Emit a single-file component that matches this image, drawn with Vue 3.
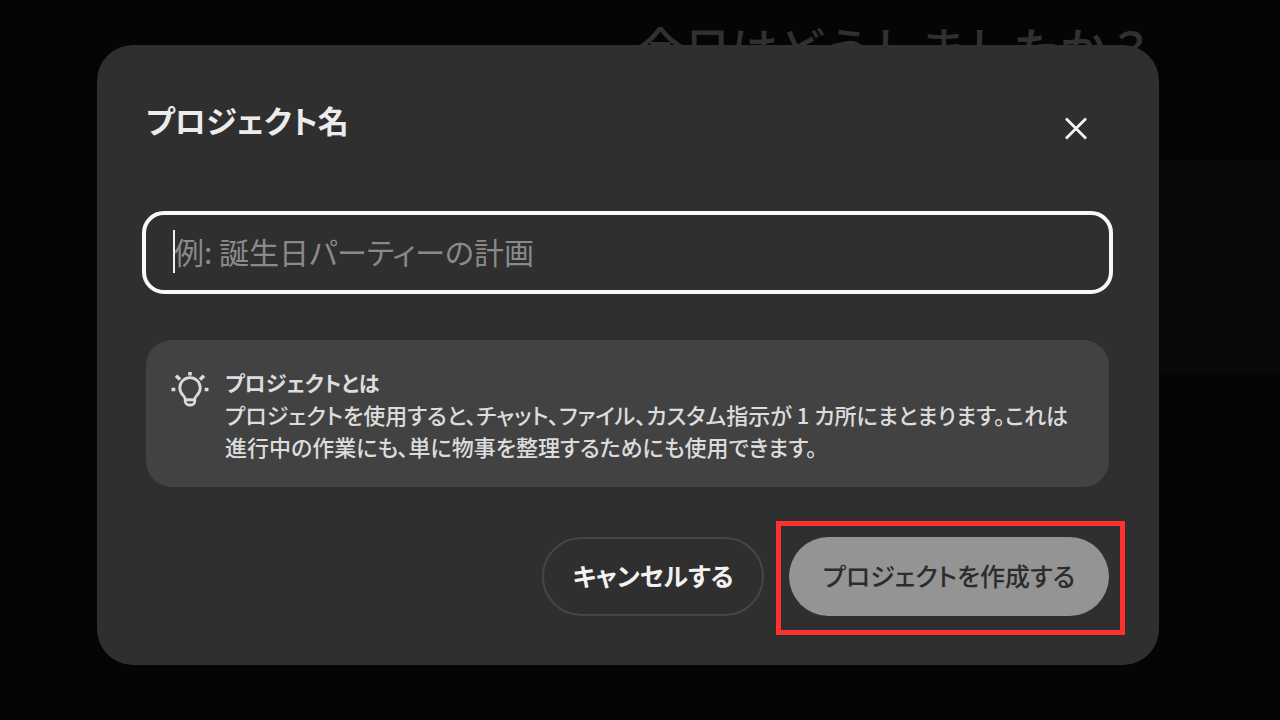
<script setup>
import { ref } from 'vue'

const projectName = ref('')
</script>

<template>
  <div class="page">
    <main class="home">
      <h1 class="greeting">今日はどうしましたか？</h1>
      <div class="composer"></div>
    </main>

    <div class="overlay">
      <form class="dialog" role="dialog" aria-labelledby="dialog-title" @submit.prevent>
        <header class="head">
          <h2 id="dialog-title" class="title"><label for="project-name">プロジェクト名</label></h2>
          <button class="close" type="button" aria-label="閉じる">
            <svg width="24" height="24" viewBox="0 0 24 24" fill="none" stroke="currentColor" stroke-width="2.8">
              <path d="M2 2.500 22 22.500M22 2.500 2 22.500" />
            </svg>
          </button>
        </header>

        <div class="field">
          <input id="project-name" v-model="projectName" class="input" type="text" placeholder="例: 誕生日パーティーの計画" />
          <span class="caret"></span>
        </div>

        <section class="info">
          <svg class="bulb" width="40" height="40" viewBox="0 0 40 40" fill="none" stroke="currentColor" stroke-width="2.8">
            <path d="M15.200 30v-1.800c0-1.700-1-2.700-2.200-4a10.200 10.200 0 1 1 14 0c-1.200 1.300-2.200 2.300-2.200 4v1.800a4 4 0 0 1-4 4h-1.600a4 4 0 0 1-4-4z" />
            <path d="M15 28.800h10" stroke-width="3" />
            <path d="M20 1v3.600M1.500 18.500h3.800M34.700 18.500h3.800M6 4.800l4 3.700M34 4.800l-4 3.700" stroke-width="3.600" />
          </svg>
          <div class="info-text">
            <h3 class="info-title">プロジェクトとは</h3>
            <p class="info-body">プロジェクトを使用すると、チャット、ファイル、カスタム指示が 1 カ所にまとまります。これは<br />進行中の作業にも、単に物事を整理するためにも使用できます。</p>
          </div>
        </section>

        <footer class="actions">
          <button class="btn cancel" type="button">キャンセルする</button>
          <div class="submit-wrap">
            <button class="btn submit" type="submit">プロジェクトを作成する</button>
            <span class="highlight"></span>
          </div>
        </footer>
      </form>
    </div>
  </div>
</template>

<style>
body {
  background: #050505;
}
</style>

<style scoped>
.page {
  position: relative;
  min-height: 100vh;
  overflow: hidden;
  background: #050505;
  color: #ececec;
  font-family: "Noto Sans CJK JP", sans-serif;
  font-feature-settings: "palt";
}

.page * {
  box-sizing: border-box;
}

.home {
  position: absolute;
  inset: 0;
}

.greeting {
  margin: 0;
  padding: 15px 126px 0 0;
  height: 161px;
  color: #303030;
  font-size: 47px;
  font-weight: 500;
  line-height: 64px;
  text-align: right;
  font-feature-settings: normal;
}

.composer {
  height: 212px;
  margin-left: 480px;
  background: #090909;
}

.overlay {
  position: relative;
  padding: 45px 121px 55px 97px;
}

.dialog {
  display: flex;
  flex-direction: column;
  padding: 48px 46px 49px 45px;
  border-radius: 36px;
  background: #2f2f2f;
}

.head {
  display: flex;
  justify-content: space-between;
  padding: 0 17px 0 4px;
  height: 118px;
}

.title {
  margin: 0;
  font-size: 31px;
  font-weight: 700;
  line-height: 54px;
}

.close {
  display: grid;
  place-items: center;
  width: 40px;
  height: 40px;
  margin-top: 15px;
  padding: 0;
  border: 0;
  background: none;
  color: #f4f4f4;
}

.field {
  position: relative;
}

.input {
  display: block;
  width: 100%;
  height: 83px;
  padding: 0 28px 4px;
  border: 4px solid #f8f8f8;
  border-radius: 22px;
  outline: 0;
  background: #2f2f2f;
  color: #ececec;
  font-family: inherit;
  font-feature-settings: inherit;
  font-size: 30px;
}

.input::placeholder {
  color: #8a8a8a;
  opacity: 1;
}

.caret {
  position: absolute;
  top: 19px;
  left: 31px;
  width: 2px;
  height: 43px;
  background: #f0f0f0;
}

.info {
  display: flex;
  gap: 15px;
  margin: 46px 4px 0;
  padding: 26px 24px 25px;
  border-radius: 26px;
  background: #424242;
  color: #dcdcdc;
}

.bulb {
  flex: none;
  margin-top: 5px;
}

.info-text {
  white-space: nowrap;
}

.info-title,
.info-body {
  margin: 0;
  font-size: 22px;
  line-height: 32px;
}

.info-title {
  font-size: 21px;
  font-weight: 700;
}

.info-body {
  font-weight: 500;
}

.actions {
  display: flex;
  justify-content: flex-end;
  gap: 25px;
  margin: 50px 4px 0 0;
}

.btn {
  height: 79px;
  padding: 0 0 3px;
  border-radius: 40px;
  font-family: inherit;
  font-feature-settings: inherit;
  font-size: 25px;
  white-space: nowrap;
}

.cancel {
  width: 222px;
  border: 2px solid #464646;
  background: transparent;
  color: #f2f2f2;
  font-weight: 700;
}

.submit-wrap {
  position: relative;
}

.submit {
  width: 320px;
  border: 0;
  background: #949494;
  color: #2c2c2c;
  font-weight: 500;
}

.highlight {
  position: absolute;
  inset: -16px -16px -19px -13px;
  border: 5px solid #ff3131;
  pointer-events: none;
}
</style>
